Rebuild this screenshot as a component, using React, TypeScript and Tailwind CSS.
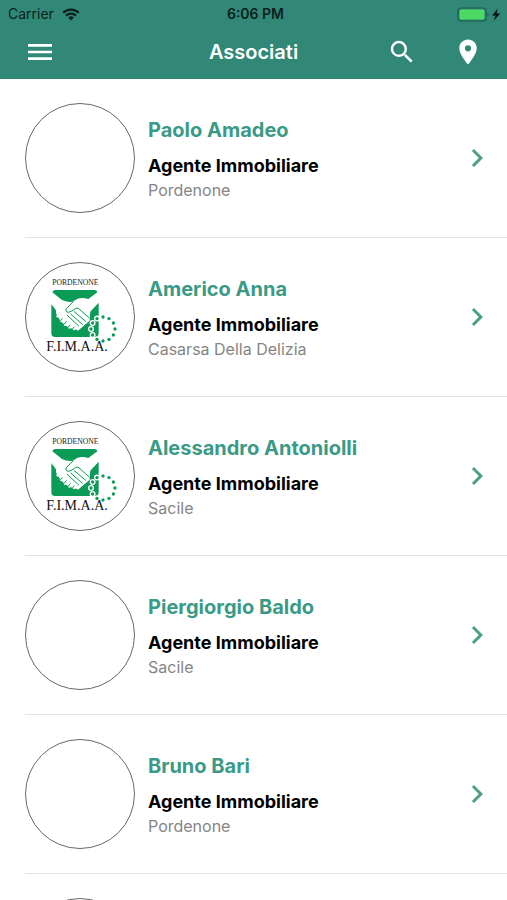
import { MdChevronRight, MdMenu, MdPlace, MdSearch } from "react-icons/md";

type Member = {
  name: string;
  role: string;
  city: string;
  hasLogo: boolean;
};

const members: Member[] = [
  { name: "Paolo Amadeo", role: "Agente Immobiliare", city: "Pordenone", hasLogo: false },
  { name: "Americo Anna", role: "Agente Immobiliare", city: "Casarsa Della Delizia", hasLogo: true },
  { name: "Alessandro Antoniolli", role: "Agente Immobiliare", city: "Sacile", hasLogo: true },
  { name: "Piergiorgio Baldo", role: "Agente Immobiliare", city: "Sacile", hasLogo: false },
  { name: "Bruno Bari", role: "Agente Immobiliare", city: "Pordenone", hasLogo: false },
];

// the ring of twelve dots next to the handshake
const ringDots = Array.from({ length: 12 }, (_, i) => {
  const angle = (i * Math.PI) / 6;
  return { cx: 165 + 36 * Math.cos(angle), cy: 129 + 36 * Math.sin(angle) };
});

function FimaaLogo() {
  return (
    <svg viewBox="-66 -69 324 324" className="size-full" role="img" aria-label="F.I.M.A.A. Pordenone">
      <text x="82" y="-3" textAnchor="middle" fontSize="23" fill="#222" className="font-['Liberation_Serif',serif]">
        PORDENONE
      </text>
      <path d="M22 12H140Q147 12 148 19L121 39Q105 34 89 38L73 48Q55 49 42 42L13 19Q15 12 22 12Z" fill="#0a9b57" />
      <path d="M10 54L24 62L24 82L40 104L90 134L125 104L126 78L152 50V142Q152 153 141 153H21Q10 153 10 142Z" fill="#0a9b57" />
      {/* clasped hands */}
      <path
        d="M10 40L38 43L62 50L75 47L91 39Q106 36 120 41L152 36V48L127 75L125 98L118 104L106 116L98 124Q91 136 86 130L77 133L70 127L62 128L57 120L48 119L45 110L36 107L34 97L25 93L27 82L22 70L10 55Z"
        fill="#fff"
      />
      <g fill="none" stroke="#0a9b57" strokeWidth="3" strokeLinecap="round" strokeLinejoin="round">
        <path d="M75 48L55 68Q51 77 60 79Q68 79 82 68L90 66L124 96" />
        <path d="M79 77L113 106" />
        <path d="M68 84L103 115" />
        <path d="M58 88L92 120" />
        <path d="M36 106L43 98M46 117L55 107M59 126L66 117M72 131L78 123" />
      </g>
      {ringDots.map((dot, i) => (
        <g key={i}>
          <circle cx={dot.cx} cy={dot.cy} r="9" fill="#fff" />
          <circle cx={dot.cx} cy={dot.cy} r="5" fill="#0a9b57" />
        </g>
      ))}
      <text x="87" y="196" textAnchor="middle" fontSize="42" fill="#111" className="font-['Liberation_Serif',serif]">
        F.I.M.A.A.
      </text>
    </svg>
  );
}

function Avatar({ hasLogo }: { hasLogo: boolean }) {
  return (
    <div className="size-[110px] shrink-0 overflow-hidden rounded-full border border-[#666] bg-white">
      {hasLogo && <FimaaLogo />}
    </div>
  );
}

function StatusBar() {
  return (
    <div className="grid h-7 grid-cols-3 items-center pr-1 pl-2 text-sm text-[#0b1f1b]">
      <div className="flex items-center gap-2">
        <span>Carrier</span>
        <svg viewBox="0 0 18 13" className="h-[13px] w-[18px]" aria-hidden="true">
          <g fill="none" stroke="currentColor" strokeWidth="2.2">
            <path d="M1.2 4.8a11 11 0 0 1 15.6 0" />
            <path d="M4 7.8a7 7 0 0 1 10 0" />
          </g>
          <path d="M9 12.5L6.2 9.7a4 4 0 0 1 5.6 0z" fill="currentColor" />
        </svg>
      </div>
      <span className="text-center font-semibold">6:06 PM</span>
      <svg viewBox="0 0 46 15" className="h-[15px] w-[46px] justify-self-end" aria-hidden="true">
        <rect x="1" y="1" width="28" height="13" rx="3" fill="none" stroke="#1d5a4e" strokeWidth="1.2" />
        <rect x="2.5" y="2.5" width="25" height="10" rx="1.5" fill="#4cd964" />
        <path d="M30.5 5.5a2.5 2.5 0 0 1 0 4z" fill="#1d5a4e" />
        <path d="M40.8 1.5L35.2 8.4h3.4l-1.8 5.4 6.4-7.4h-3.6z" fill="#06110e" />
      </svg>
    </div>
  );
}

function Header() {
  return (
    <header className="h-[79px] shrink-0 bg-[#318877]">
      <StatusBar />
      <div className="grid h-12 grid-cols-3 items-center px-6 text-white">
        <button type="button" aria-label="Menu" className="justify-self-start">
          <MdMenu className="size-8" />
        </button>
        <h1 className="text-center text-xl font-semibold">Associati</h1>
        <div className="flex justify-end gap-9">
          <button type="button" aria-label="Cerca">
            <MdSearch className="size-[30px]" />
          </button>
          <button type="button" aria-label="Mappa">
            <MdPlace className="size-[30px]" />
          </button>
        </div>
      </div>
    </header>
  );
}

function MemberRow({ member }: { member: Member }) {
  return (
    <li className="ml-[25px] border-b border-[#e4e4e4]">
      <a href="#" className="flex h-[158px] items-center pr-3">
        <Avatar hasLogo={member.hasLogo} />
        <div className="ml-[13px] min-w-0 flex-1">
          <h2 className="text-xl leading-7 font-bold text-[#3a9a86]">{member.name}</h2>
          <p className="mt-2 text-lg leading-7 font-bold text-black">{member.role}</p>
          <p className="text-base leading-5 text-[#858585]">{member.city}</p>
        </div>
        <MdChevronRight className="size-9 shrink-0 text-[#4f9e8c]" />
      </a>
    </li>
  );
}

export default function App() {
  return (
    <div className="flex h-screen flex-col overflow-hidden bg-white font-['Inter',sans-serif]">
      <Header />
      <main className="min-h-0 flex-1 overflow-hidden">
        <ul>
          {members.map((member) => (
            <MemberRow key={member.name} member={member} />
          ))}
          <li className="ml-[25px] pt-6">
            <Avatar hasLogo={false} />
          </li>
        </ul>
      </main>
    </div>
  );
}
